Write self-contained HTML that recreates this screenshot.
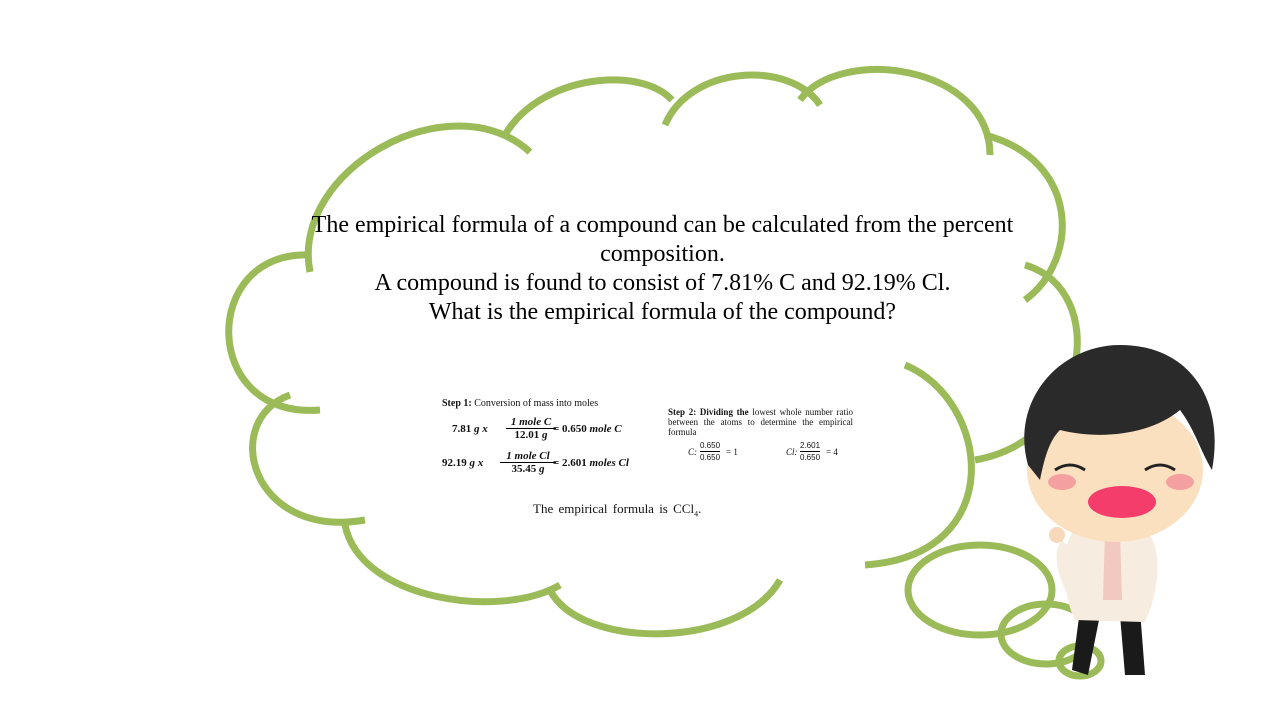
<!DOCTYPE html><html><head><style>
body{margin:0;width:1280px;height:720px;background:#fff;overflow:hidden;position:relative;font-family:"Liberation Serif",serif}
.t{position:absolute;left:290px;width:745px;top:211px;text-align:center;font-size:24px;line-height:29px;color:#000}
.s{position:absolute;font-size:10px;color:#111}
.m{position:absolute;font-family:"Liberation Serif",serif;font-size:11px;font-weight:bold;color:#111}
</style></head><body>
<svg width="1280" height="720" style="position:absolute;left:0;top:0" fill="none" stroke="#9BBB59" stroke-width="7" stroke-linecap="butt">
<path d="M310 272 C290 170 450 80 530 152"/>
<path d="M505 135 C540 75 640 65 672 100"/>
<path d="M665 125 C690 65 790 60 820 105"/>
<path d="M800 100 C840 45 990 65 990 155"/>
<path d="M985 135 C1080 160 1080 260 1025 300"/>
<path d="M1025 265 C1110 290 1090 440 975 460"/>
<path d="M905 365 C990 400 1010 555 865 565"/>
<path d="M780 580 C740 650 580 650 550 590"/>
<path d="M560 585 C500 620 360 600 345 525"/>
<path d="M365 520 C250 540 220 420 290 395"/>
<path d="M320 410 C200 420 200 250 310 255"/>
<ellipse cx="980" cy="590" rx="72" ry="45"/>
<ellipse cx="1046" cy="634" rx="45" ry="30"/>
<ellipse cx="1080" cy="661" rx="21" ry="15"/>
</svg>
<div class="t">The empirical formula of a compound can be calculated from the percent composition.<br>A compound is found to consist of 7.81% C and 92.19% Cl.<br>What is the empirical formula of the compound?</div>
<div class="s" style="left:442px;top:398px"><b>Step 1:</b> Conversion of mass into moles</div>
<div class="m" style="left:452px;top:423px">7.81 <i>g x</i></div>
<div class="m" style="left:506px;top:416px;text-align:center;width:50px"><i>1 mole C</i><div style="border-top:1px solid #000">12.01 <i>g</i></div></div>
<div class="m" style="left:553px;top:423px">= 0.650 <i>mole C</i></div>
<div class="m" style="left:442px;top:457px">92.19 <i>g x</i></div>
<div class="m" style="left:500px;top:450px;text-align:center;width:56px"><i>1 mole Cl</i><div style="border-top:1px solid #000">35.45 <i>g</i></div></div>
<div class="m" style="left:553px;top:457px">= 2.601 <i>moles Cl</i></div>
<div class="s" style="left:668px;top:407px;width:185px;font-size:9px;line-height:10px;text-align:justify"><b>Step 2: Dividing the</b> lowest whole number ratio between the atoms to determine the empirical formula</div>
<div class="s" style="left:688px;top:447px;font-size:9px"><i>C:</i></div>
<div class="s" style="left:700px;top:440px;font-family:'Liberation Sans',sans-serif;font-size:8px;line-height:11px;text-align:center">0.650<div style="border-top:1px solid #000">0.650</div></div>
<div class="s" style="left:726px;top:447px;font-size:9px">= 1</div>
<div class="s" style="left:786px;top:447px;font-size:9px"><i>Cl:</i></div>
<div class="s" style="left:800px;top:440px;font-family:'Liberation Sans',sans-serif;font-size:8px;line-height:11px;text-align:center">2.601<div style="border-top:1px solid #000">0.650</div></div>
<div class="s" style="left:826px;top:447px;font-size:9px">= 4</div>
<div class="s" style="left:533px;top:501px;font-size:13px;word-spacing:2px">The empirical formula is CCl<sub style="font-size:8px">4</sub>.</div>
<svg width="240" height="360" style="position:absolute;left:1000px;top:340px">
<path d="M80 270 L72 330 L88 335 L100 275 Z M120 275 L125 335 L145 335 L140 270Z" fill="#1a1a1a"/>
<path d="M80 185 C60 195 60 250 75 280 L145 282 C160 250 165 200 140 185 Z" fill="#f6ece0"/>
<path d="M105 192 L120 192 L122 260 L103 260Z" fill="#f2c9c0"/>
<path d="M62 200 C50 215 60 240 70 260 L80 255 L72 210Z" fill="#f6ece0"/>
<circle cx="57" cy="195" r="8" fill="#f8d8b8"/>
<ellipse cx="115" cy="130" rx="88" ry="72" fill="#fbe0c0"/>
<path d="M28 125 C10 60 60 5 120 5 C190 5 225 60 212 130 C200 110 195 90 180 70 C150 95 100 100 60 90 C50 100 45 115 40 140Z" fill="#2a2a2a"/>
<ellipse cx="62" cy="142" rx="14" ry="8" fill="#f4a0a0"/>
<ellipse cx="180" cy="142" rx="14" ry="8" fill="#f4a0a0"/>
<path d="M55 130 Q70 120 85 130 M145 130 Q160 120 175 130" stroke="#222" stroke-width="3" fill="none"/>
<ellipse cx="122" cy="162" rx="34" ry="16" fill="#f43d6a"/>
</svg>
</body></html>
